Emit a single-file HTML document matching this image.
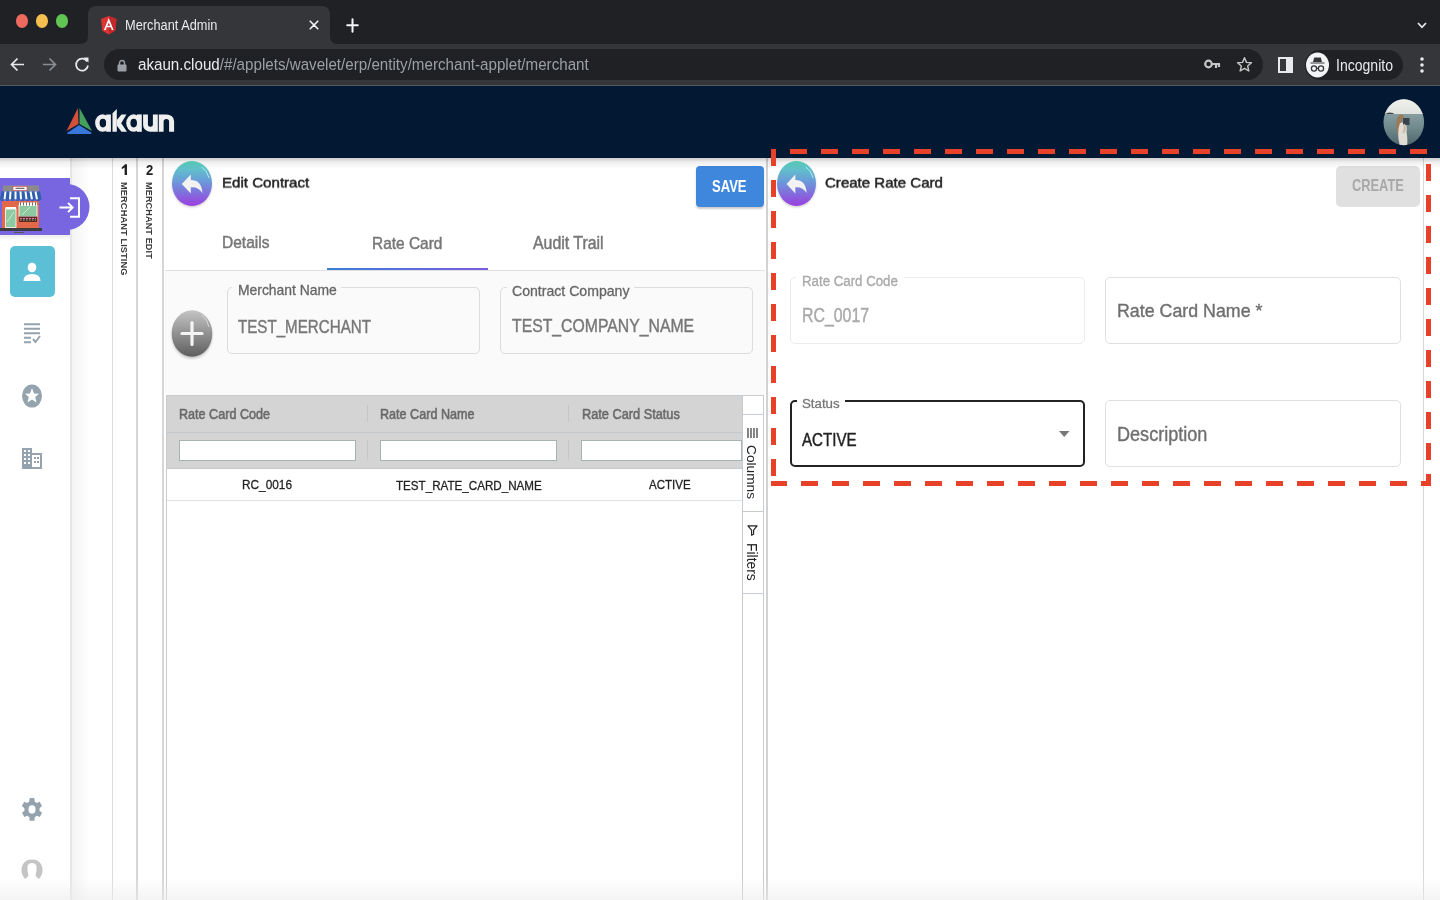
<!DOCTYPE html>
<html><head><meta charset="utf-8">
<style>
*{box-sizing:border-box;margin:0;padding:0}
html,body{width:1440px;height:900px;overflow:hidden;background:#fff;font-family:"Liberation Sans",sans-serif}
.abs{position:absolute}
.t{position:absolute;white-space:nowrap;line-height:1;transform-origin:0 0;will-change:transform}
svg{position:absolute;overflow:visible}
</style></head><body>

<div class="abs" style="left:0px;top:0px;width:1440px;height:44px;background:#202124"></div>
<div class="abs" style="left:15.75px;top:14px;width:12.5px;height:14px;background:#ed6a5e;border-radius:50%"></div>
<div class="abs" style="left:35.75px;top:14px;width:12.5px;height:14px;background:#f5bf4f;border-radius:50%"></div>
<div class="abs" style="left:55.75px;top:14px;width:12.5px;height:14px;background:#61c554;border-radius:50%"></div>
<div class="abs" style="left:88px;top:6px;width:242px;height:39px;background:#35363a;border-radius:8px 8px 0 0"></div>
<svg style="left:80px;top:36px" width="8" height="8"><path d="M0 8 Q8 8 8 0 L8 8 Z" fill="#35363a"/></svg>
<svg style="left:330px;top:36px" width="8" height="8"><path d="M0 0 Q0 8 8 8 L0 8 Z" fill="#35363a"/></svg>
<svg style="left:101px;top:15.5px" width="15.5" height="18.5" viewBox="0 0 250 270" preserveAspectRatio="none"><path d="M125 0 L0 45 L19 212 L125 270 L231 212 L250 45 Z" fill="#dd3434"/><path d="M125 0 L125 270 L231 212 L250 45 Z" fill="#c3282b"/><path d="M125 30 L47 205 H76 L92 166 H158 L174 205 H203 Z M125 98 L148 144 H102 Z" fill="#fff"/></svg>
<div class="t" style="left:124.62px;top:18.80px;font-size:12.80px;color:#e8eaed;font-weight:normal;transform:scale(1.0000,1.0800);">Merchant Admin</div>
<svg style="left:309px;top:19.8px" width="10" height="10"><path d="M1.2 1.2 L8.8 8.8 M8.8 1.2 L1.2 8.8" stroke="#f1f3f4" stroke-width="1.6" stroke-linecap="round"/></svg>
<svg style="left:345.5px;top:17.5px" width="13" height="15"><path d="M6.5 1.2 V13.8 M1.2 7.2 H11.8" stroke="#f6f7f8" stroke-width="2" stroke-linecap="round"/></svg>
<svg style="left:1417px;top:22px" width="10" height="7"><path d="M1 1 L5 5.3 L9 1" stroke="#e8eaed" stroke-width="1.7" fill="none"/></svg>
<div class="abs" style="left:0px;top:44px;width:1440px;height:41px;background:#35363a"></div>
<div class="abs" style="left:0px;top:85px;width:1440px;height:1px;background:#55585c"></div>
<svg style="left:10px;top:57px" width="15" height="15"><path d="M14 7.5 H2 M7.5 1.5 L1.5 7.5 L7.5 13.5" stroke="#e8eaed" stroke-width="1.7" fill="none"/></svg>
<svg style="left:42px;top:57px" width="15" height="15"><path d="M1 7.5 H13 M7.5 1.5 L13.5 7.5 L7.5 13.5" stroke="#8a8d91" stroke-width="1.7" fill="none"/></svg>
<svg style="left:74px;top:56px" width="16" height="17"><path d="M13.2 5.5 A6 6 0 1 0 14 9.5" stroke="#e8eaed" stroke-width="1.7" fill="none"/><path d="M9.5 1.5 H14.5 V6.5 Z" fill="#e8eaed"/></svg>
<div class="abs" style="left:104px;top:49px;width:1159px;height:31px;background:#202124;border-radius:16px"></div>
<svg style="left:117px;top:59px" width="10" height="13"><path d="M2.5 6 V4 A2.5 2.5 0 0 1 7.5 4 V6" stroke="#9aa0a6" stroke-width="1.4" fill="none"/><rect x="0.5" y="5.5" width="9" height="7" rx="1" fill="#9aa0a6"/></svg>
<div class="t" style="left:137.55px;top:55.82px;font-size:15.16px;color:#e8eaed;font-weight:normal;transform:scale(1.0000,1.1000);">akaun.cloud<span style="color:#9aa0a6">/#/applets/wavelet/erp/entity/merchant-applet/merchant</span></div>
<svg style="left:1204px;top:59px" width="17" height="11"><circle cx="4.5" cy="5" r="3.3" stroke="#c4c7c5" stroke-width="2.2" fill="none"/><path d="M7.5 5 H16 M12 5 V9 M15 5 V8" stroke="#c4c7c5" stroke-width="2.2"/></svg>
<svg style="left:1236px;top:56px" width="17" height="17" viewBox="0 0 24 24"><path d="M12 2.5 L14.8 9 L21.8 9.6 L16.5 14.2 L18.1 21.2 L12 17.4 L5.9 21.2 L7.5 14.2 L2.2 9.6 L9.2 9 Z" stroke="#c4c7c5" stroke-width="2" fill="none" stroke-linejoin="round"/></svg>
<svg style="left:1278px;top:57px" width="15" height="16"><rect x="1" y="1" width="13" height="14" stroke="#e8eaed" stroke-width="2" fill="none"/><rect x="8" y="1" width="6" height="14" fill="#e8eaed"/></svg>
<div class="abs" style="left:1305px;top:50px;width:98px;height:30px;background:#202124;border-radius:15px"></div>
<svg style="left:1306px;top:52px" width="23" height="26"><ellipse cx="11.5" cy="13" rx="11.5" ry="12.5" fill="#f1f3f4"/><path d="M7 10 L8.2 5.5 H14.8 L16 10 Z M4.5 10.5 H18.5 V11.5 H4.5 Z" fill="#35363a"/><circle cx="8" cy="16.5" r="2.6" stroke="#35363a" stroke-width="1.3" fill="none"/><circle cx="15" cy="16.5" r="2.6" stroke="#35363a" stroke-width="1.3" fill="none"/><path d="M10.6 16.3 H12.4" stroke="#35363a" stroke-width="1.2"/></svg>
<div class="t" style="left:1335.58px;top:56.82px;font-size:14.04px;color:#e8eaed;font-weight:normal;transform:scale(1.0000,1.1900);">Incognito</div>
<svg style="left:1420px;top:57px" width="4" height="16"><circle cx="2" cy="2" r="1.8" fill="#e8eaed"/><circle cx="2" cy="8" r="1.8" fill="#e8eaed"/><circle cx="2" cy="14" r="1.8" fill="#e8eaed"/></svg>
<div class="abs" style="left:0px;top:86px;width:1440px;height:72px;background:#031832"></div>
<svg style="left:66px;top:108px" width="27" height="26" viewBox="0 0 27 26"><path d="M12 0 L12.5 16 L0.5 23 Z" fill="#d4503a"/><path d="M13.5 0 L26 23 L13.5 16 Z" fill="#45a05b"/><path d="M13 17 L26 25 Q25 26 24 26 H2.5 Q1 26 1 25 Z" fill="#3a77db"/></svg>
<svg style="left:0;top:0" width="200" height="150"><g fill="#efefef"><path fill-rule="evenodd" d="M95.1 123.05 A7.5 8.75 0 1 0 110.1 123.05 A7.5 8.75 0 1 0 95.1 123.05 Z M99.6 123.05 A3.3 4.35 0 1 0 106.2 123.05 A3.3 4.35 0 1 0 99.6 123.05 Z"/><rect x="106.2" y="114.5" width="4.7" height="17.3"/><path d="M112.5 113.2 L116.8 109 V131.8 H112.5 Z"/><path d="M116.8 120 L121.5 114.5 H126.4 L121.2 123.2 L127 131.8 H121.5 L116.8 125.5 Z"/><path fill-rule="evenodd" d="M126.2 123.05 A7.4 8.7 0 1 0 141 123.05 A7.4 8.7 0 1 0 126.2 123.05 Z M130.4 123.1 A3.3 4.3 0 1 0 137 123.1 A3.3 4.3 0 1 0 130.4 123.1 Z"/><rect x="137" y="114.4" width="4.8" height="17.4"/><path d="M143.1 114.4 H147.9 V124.3 A2.5 2.5 0 0 0 152.9 124.3 V114.4 H157.8 V131.7 H150.4 A7.3 6.5 0 0 1 143.1 125.2 Z"/><path d="M158.8 131.7 V114.4 H166.4 A7.7 6.5 0 0 1 174.1 120.9 V131.7 H169.1 V121.6 A2.75 2.5 0 0 0 163.6 121.6 V131.7 Z"/></g></svg>
<svg style="left:1383px;top:99px" width="42" height="48"><defs><clipPath id="av"><ellipse cx="20.8" cy="23.3" rx="20.3" ry="23"/></clipPath><linearGradient id="sea" x1="0" y1="0" x2="0" y2="1"><stop offset="0" stop-color="#9fb4b6"/><stop offset="0.6" stop-color="#6f898c"/><stop offset="1" stop-color="#4a6468"/></linearGradient><linearGradient id="sky" x1="0" y1="0" x2="0" y2="1"><stop offset="0" stop-color="#f2f1ec"/><stop offset="1" stop-color="#dfe2de"/></linearGradient></defs>
<g clip-path="url(#av)"><rect width="42" height="48" fill="url(#sea)"/><rect width="42" height="15" fill="url(#sky)"/><path d="M2 15 Q5 12.5 10 14 L11 15 Z" fill="#3d4a48"/>
<path d="M16 16 Q12.5 20 13.5 30 Q14 35 15.5 36 L18 27 Q18.5 20 21 18 Q19.5 14.5 16 16Z" fill="#9b7a55"/>
<path d="M17 24 Q14.5 30 15.5 40 L17 48 H24 Q25 40 23.5 33 Q24.5 27 22 23 Z" fill="#e0ddd6"/>
<path d="M20 19 H26.5 V26 H20 Z" fill="#38434a"/><path d="M21 25 Q23 30 20 34" stroke="#c9b9a4" stroke-width="2" fill="none"/></g></svg>
<div class="abs" style="left:70px;top:158px;width:2px;height:742px;background:#e6e6e6"></div>
<div class="abs" style="left:72px;top:158px;width:18px;height:742px;background:linear-gradient(90deg,#f3f3f3,#fff)"></div>
<div class="abs" style="left:0px;top:178px;width:70px;height:57px;background:#7866e0"></div>
<svg style="left:46px;top:184px" width="44" height="46"><ellipse cx="21" cy="23" rx="22.5" ry="23" fill="#7866e0"/></svg>
<div class="abs" style="left:0px;top:235px;width:70px;height:6px;background:linear-gradient(rgba(0,0,0,0.08),rgba(0,0,0,0))"></div>
<svg style="left:0px;top:184px" width="44" height="52" viewBox="0 0 44 52">
<rect x="3" y="1.5" width="36" height="6" fill="#8b8b8b"/><rect x="13" y="2.3" width="14" height="4" fill="#fff" stroke="#d44" stroke-width="0.6"/><path d="M15.5 4.3 H24.5" stroke="#555" stroke-width="1.1"/>
<path d="M1.5 7.5 H40 L41.5 15.5 H0 Z" fill="#2e5fae"/>
<path d="M5.5 7.5 L4.5 15.5 M10.5 7.5 L10 15.5 M15.5 7.5 L15.5 15.5 M20.5 7.5 L21 15.5 M25.5 7.5 L26.5 15.5 M30.5 7.5 L32 15.5 M35.5 7.5 L37 15.5" stroke="#fff" stroke-width="2"/>
<path d="M0 15.5 Q2.5 18.5 5 15.5 Q7.5 18.5 10 15.5 Q12.5 18.5 15 15.5 Q17.5 18.5 20 15.5 Q22.5 18.5 25 15.5 Q27.5 18.5 30 15.5 Q32.5 18.5 35 15.5 Q37.5 18.5 41.5 15.5" fill="#2e5fae"/>
<rect x="2" y="17" width="37" height="27" fill="#e2684a"/>
<rect x="5.5" y="25" width="10.5" height="18.5" fill="#8fc9a1" stroke="#fff" stroke-width="0.8"/><path d="M7 38 L14 28" stroke="#c8ead2" stroke-width="1"/>
<rect x="5.5" y="23" width="10.5" height="2" fill="#fff"/>
<rect x="19" y="21.5" width="18" height="11" fill="#8fc9a1" stroke="#fff" stroke-width="0.8"/><path d="M22 31 L30 23" stroke="#c8ead2" stroke-width="1"/>
<path d="M19 18.5 H37 V21.5 H19Z" fill="#fff"/><path d="M20.5 18.5 V21.5 M23.5 18.5 V21.5 M26.5 18.5 V21.5 M29.5 18.5 V21.5 M32.5 18.5 V21.5 M35.5 18.5 V21.5" stroke="#444" stroke-width="0.8"/>
<rect x="19" y="32.5" width="18" height="5.5" fill="#5a2a2a"/><path d="M20 34.5 H36" stroke="#e07aa8" stroke-width="1.2" stroke-dasharray="2 1"/><path d="M20 36 H36" stroke="#7ccf7c" stroke-width="0.9" stroke-dasharray="1.5 1.5"/>
<rect x="0" y="44" width="42" height="3" fill="#3c3c3c"/><rect x="14" y="48" width="10" height="1" fill="#555"/>
</svg>
<svg style="left:58px;top:196px" width="23" height="23"><path d="M12 2.2 H21 V20.8 H12" stroke="#fff" stroke-width="1.9" fill="none"/><path d="M1.5 11.5 H14.5 M10 6.8 L14.7 11.5 L10 16.2" stroke="#fff" stroke-width="1.9" fill="none"/></svg>
<div class="abs" style="left:10px;top:246px;width:45px;height:51px;background:#5bc0d6;border-radius:5px"></div>
<svg style="left:23px;top:262px" width="18" height="20"><ellipse cx="9" cy="5.5" rx="4.3" ry="4.8" fill="#fff"/><path d="M0.5 19 Q0.5 12 9 12 Q17.5 12 17.5 19 Z" fill="#fff"/></svg>
<svg style="left:24px;top:323px" width="17" height="22"><path d="M0 1.2 H16 M0 5.7 H16 M0 10.2 H16 M0 14.7 H7 M0 19.2 H7" stroke="#94a3ad" stroke-width="2"/><path d="M9 16 L11.5 19 L16 13" stroke="#94a3ad" stroke-width="2" fill="none"/></svg>
<svg style="left:22px;top:384px" width="20" height="24"><ellipse cx="10" cy="12" rx="10" ry="11.5" fill="#94a3ad"/><path d="M10 4 L12 9.5 L17 9.7 L13.2 13 L14.5 18.5 L10 15.5 L5.5 18.5 L6.8 13 L3 9.7 L8 9.5 Z" fill="#fff"/></svg>
<svg style="left:22px;top:448px" width="20" height="21"><path d="M0 0 H10 V5 H20 V21 H0 Z" fill="#94a3ad"/><g fill="#fff"><rect x="2" y="2" width="2" height="2"/><rect x="6" y="2" width="2" height="2"/><rect x="2" y="6" width="2" height="2"/><rect x="6" y="6" width="2" height="2"/><rect x="2" y="10" width="2" height="2"/><rect x="6" y="10" width="2" height="2"/><rect x="2" y="14" width="2" height="2"/><rect x="6" y="14" width="2" height="2"/><rect x="10" y="7" width="8" height="12"/></g><g fill="#94a3ad"><rect x="12" y="9" width="2" height="2"/><rect x="12" y="13" width="2" height="2"/><rect x="15" y="9" width="2" height="2"/><rect x="15" y="13" width="2" height="2"/></g></svg>
<svg style="left:22px;top:797.5px" width="20" height="22.8" viewBox="4.5 3 17 18" preserveAspectRatio="none"><path fill="#94a3ad" d="M19.4 13a7.5 7.5 0 0 0 0-2l2.1-1.6-2-3.5-2.5 1a7.3 7.3 0 0 0-1.7-1L15 3h-4l-.4 2.9a7.3 7.3 0 0 0-1.7 1l-2.5-1-2 3.5L6.6 11a7.5 7.5 0 0 0 0 2l-2.1 1.6 2 3.5 2.5-1c.5.4 1.1.7 1.7 1L11 21h4l.4-2.9c.6-.3 1.2-.6 1.7-1l2.5 1 2-3.5z"/><ellipse cx="13" cy="12" rx="3" ry="3.3" fill="#fff"/></svg>
<svg style="left:21px;top:859px" width="22" height="21"><path d="M4 20 Q0 15 0.5 10 Q1.5 0.5 11 0.5 Q20.5 0.5 21.5 10 Q22 15 18 20 Q15 18 14.5 16 Q16 12 15.5 7 Q14.5 4 11 4 Q7.5 4 6.5 7 Q6 12 7.5 16 Q7 18 4 20 Z" fill="#c4c4c4"/></svg>
<div class="abs" style="left:112px;top:158px;width:1px;height:742px;background:#dcdcdc"></div>
<div class="abs" style="left:136px;top:158px;width:2px;height:742px;background:#d6d6d6"></div>
<div class="abs" style="left:162px;top:158px;width:2px;height:742px;background:#d6d6d6"></div>
<svg style="left:0;top:0" width="200" height="200"><path d="M121.8 167.2 L125.2 164.3 H127 V175 H124.6 V167.6 L121.8 169.3 Z" fill="#222"/></svg>
<div class="t" style="left:145.61px;top:162.63px;font-size:13.00px;color:#222;font-weight:bold;transform:scale(1.0000,1.1000);">2</div>
<div class="t" style="left:128px;top:182px;font-size:9.25px;color:#3a3a3a;font-weight:bold;transform-origin:0 0;transform:rotate(90deg) scaleY(1.0);letter-spacing:0.1px">MERCHANT LISTING</div>
<div class="t" style="left:153px;top:182px;font-size:9.15px;color:#3a3a3a;font-weight:bold;transform-origin:0 0;transform:rotate(90deg);letter-spacing:0.1px">MERCHANT EDIT</div>
<svg style="left:169px;top:159px" width="46" height="51"><defs><linearGradient id="g1" x1="0" y1="0" x2="0" y2="1"><stop offset="0" stop-color="#5bd8c0"/><stop offset="0.45" stop-color="#6a9bd9"/><stop offset="1" stop-color="#9b3ee0"/></linearGradient><filter id="g1f" x="-20%" y="-20%" width="140%" height="140%"><feGaussianBlur stdDeviation="1.2"/></filter></defs>
<ellipse cx="23.0" cy="26.0" rx="20.0" ry="22.5" fill="#000" opacity="0.18" filter="url(#g1f)"/>
<ellipse cx="23.0" cy="24.5" rx="20.0" ry="22.5" fill="url(#g1)"/>
<path d="M32.6 7.8500000000000005 A18.0 20.5 0 0 1 40.2 19.1" stroke="#bff" stroke-width="1" fill="none" opacity="0.8"/>
<path d="M12.8 24.95 L21.799999999999997 15.5 L21.799999999999997 20.9 Q32.6 20.9 33.4 33.95 Q29.400000000000002 27.65 21.799999999999997 28.325 L21.799999999999997 34.4 Z" fill="#f2f2f2"/></svg>
<div class="t" style="left:221.55px;top:174.81px;font-size:15.10px;color:#222;font-weight:normal;transform:scale(1.0000,0.9600);-webkit-text-stroke:0.5px #222;">Edit Contract</div>
<div class="abs" style="left:696px;top:166px;width:68px;height:41px;background:#3f86dd;border-radius:4px;box-shadow:0 2px 2px rgba(0,0,0,0.2)"></div>
<div class="t" style="left:712.21px;top:178.40px;font-size:13.06px;color:#fff;font-weight:bold;transform:scale(1.0000,1.2300);">SAVE</div>
<div class="t" style="left:222.03px;top:234.63px;font-size:15.55px;color:#777;font-weight:normal;transform:scale(1.0000,1.0200);-webkit-text-stroke:0.45px #777;">Details</div>
<div class="t" style="left:371.54px;top:234.54px;font-size:15.45px;color:#777;font-weight:normal;transform:scale(1.0000,1.0700);-webkit-text-stroke:0.45px #777;">Rate Card</div>
<div class="t" style="left:532.52px;top:233.68px;font-size:15.90px;color:#777;font-weight:normal;transform:scale(1.0000,1.1200);-webkit-text-stroke:0.45px #777;">Audit Trail</div>
<div class="abs" style="left:165px;top:270px;width:600px;height:1px;background:#e0e0e0"></div>
<div class="abs" style="left:327px;top:268px;width:161px;height:2px;background:linear-gradient(90deg,#3a7fd8,#7a5ae0)"></div>
<div class="abs" style="left:165px;top:271px;width:600px;height:124px;background:#fafafa"></div>
<svg style="left:169px;top:308px" width="46" height="52"><defs><linearGradient id="gp" x1="0" y1="0" x2="0" y2="1"><stop offset="0" stop-color="#c4c4c4"/><stop offset="1" stop-color="#5e5e5e"/></linearGradient><filter id="gpf"><feGaussianBlur stdDeviation="1.2"/></filter></defs>
<ellipse cx="23" cy="27.5" rx="20.3" ry="23.3" fill="#000" opacity="0.2" filter="url(#gpf)"/>
<ellipse cx="23" cy="25.5" rx="20.3" ry="23.3" fill="url(#gp)"/>
<path d="M33 7 A18 21 0 0 1 40 19" stroke="#eee" stroke-width="1" fill="none" opacity="0.7"/>
<path d="M23 14.5 V36.5 M13 25.5 H33" stroke="#f4f4f4" stroke-width="3.2" stroke-linecap="round"/></svg>
<div class="abs" style="left:227px;top:287px;width:253px;height:67px;border:1px solid #dcdcdc;border-radius:5px;background:transparent"></div>
<div class="abs" style="left:232px;top:285px;width:109px;height:5px;background:#fafafa"></div>
<div class="t" style="left:237.88px;top:284.19px;font-size:13.90px;color:#666;font-weight:normal;-webkit-text-stroke:0.3px #666;">Merchant Name</div>
<div class="t" style="left:237.55px;top:316.93px;font-size:15.15px;color:#777;font-weight:normal;transform:scale(1.0000,1.2000);-webkit-text-stroke:0.35px #777;">TEST_MERCHANT</div>
<div class="abs" style="left:500px;top:287px;width:253px;height:67px;border:1px solid #dcdcdc;border-radius:5px;background:transparent"></div>
<div class="abs" style="left:507px;top:285px;width:127px;height:5px;background:#fafafa"></div>
<div class="t" style="left:511.58px;top:284.16px;font-size:14.10px;color:#666;font-weight:normal;-webkit-text-stroke:0.3px #666;">Contract Company</div>
<div class="t" style="left:511.53px;top:316.87px;font-size:15.79px;color:#777;font-weight:normal;transform:scale(1.0000,1.1800);-webkit-text-stroke:0.35px #777;">TEST_COMPANY_NAME</div>
<div class="abs" style="left:166px;top:395px;width:576px;height:505px;border-left:1px solid #c5cbce;border-top:1px solid #c5cbce;background:#fff"></div>
<div class="abs" style="left:167px;top:396px;width:575px;height:36px;background:#d4d4d4"></div>
<div class="abs" style="left:167px;top:432px;width:575px;height:1px;background:#c2c8cb"></div>
<div class="abs" style="left:167px;top:433px;width:575px;height:35px;background:#d4d4d4"></div>
<div class="abs" style="left:167px;top:468px;width:575px;height:1px;background:#c5cbce"></div>
<div class="abs" style="left:167px;top:500px;width:575px;height:1px;background:#dde2e4"></div>
<div class="abs" style="left:367px;top:405px;width:1px;height:17px;background:#c6c6c6"></div>
<div class="abs" style="left:367px;top:440px;width:1px;height:20px;background:#c6c6c6"></div>
<div class="abs" style="left:568px;top:405px;width:1px;height:17px;background:#c6c6c6"></div>
<div class="abs" style="left:568px;top:440px;width:1px;height:20px;background:#c6c6c6"></div>
<div class="abs" style="left:179px;top:440px;width:177px;height:21px;background:#fff;border:1px solid #a7b3b3;border-right-color:#a7b3b3"></div>
<div class="abs" style="left:380px;top:440px;width:177px;height:21px;background:#fff;border:1px solid #a7b3b3;border-right-color:#a7b3b3"></div>
<div class="abs" style="left:581px;top:440px;width:161px;height:21px;background:#fff;border:1px solid #a7b3b3;border-right-color:#a7b3b3"></div>
<div class="t" style="left:179.32px;top:407.99px;font-size:12.60px;color:#6a6a6a;font-weight:normal;transform:scale(1.0000,1.1000);-webkit-text-stroke:0.5px #6a6a6a;">Rate Card Code</div>
<div class="t" style="left:380.42px;top:407.99px;font-size:12.60px;color:#6a6a6a;font-weight:normal;transform:scale(1.0000,1.1000);-webkit-text-stroke:0.5px #6a6a6a;">Rate Card Name</div>
<div class="t" style="left:581.62px;top:407.97px;font-size:12.75px;color:#6a6a6a;font-weight:normal;transform:scale(1.0000,1.1000);-webkit-text-stroke:0.5px #6a6a6a;">Rate Card Status</div>
<div class="t" style="left:242.14px;top:479.10px;font-size:11.85px;color:#222;font-weight:normal;transform:scale(1.0000,1.1000);-webkit-text-stroke:0.25px #222;">RC_0016</div>
<div class="t" style="left:395.65px;top:479.13px;font-size:11.64px;color:#222;font-weight:normal;transform:scale(1.0000,1.1000);-webkit-text-stroke:0.25px #222;">TEST_RATE_CARD_NAME</div>
<div class="t" style="left:648.85px;top:479.15px;font-size:11.52px;color:#222;font-weight:normal;transform:scale(1.0000,1.1000);-webkit-text-stroke:0.25px #222;">ACTIVE</div>
<div class="abs" style="left:742px;top:395px;width:22px;height:505px;background:#fff;border-left:1px solid #c5cbce;border-right:1px solid #c5cbce;border-top:1px solid #c5cbce"></div>
<div class="abs" style="left:742px;top:414px;width:22px;height:1px;background:#c5cbce"></div>
<div class="abs" style="left:742px;top:511px;width:22px;height:1px;background:#c5cbce"></div>
<div class="abs" style="left:742px;top:593px;width:22px;height:1px;background:#c5cbce"></div>
<svg style="left:747px;top:428px" width="11" height="10"><path d="M1 0 V10 M4 0 V10 M7 0 V10 M10 0 V10" stroke="#333" stroke-width="1.2"/></svg>
<div class="t" style="left:758px;top:445px;font-size:13.7px;color:#222;transform:rotate(90deg) scaleY(1.0)">Columns</div>
<svg style="left:747px;top:525px" width="11" height="11"><path d="M0.9 0.9 H10.1 L6.6 5.2 V9.3 L4.6 10.3 V5.2 Z" stroke="#222" stroke-width="1.15" fill="none" stroke-linejoin="round"/></svg>
<div class="t" style="left:758px;top:543px;font-size:13.9px;color:#222;transform:rotate(90deg)">Filters</div>
<div class="abs" style="left:766px;top:158px;width:2px;height:742px;background:#d2d2d2"></div>
<svg style="left:774px;top:159px" width="45" height="51"><defs><linearGradient id="g2" x1="0" y1="0" x2="0" y2="1"><stop offset="0" stop-color="#5bd8c0"/><stop offset="0.45" stop-color="#6a9bd9"/><stop offset="1" stop-color="#9b3ee0"/></linearGradient><filter id="g2f" x="-20%" y="-20%" width="140%" height="140%"><feGaussianBlur stdDeviation="1.2"/></filter></defs>
<ellipse cx="22.5" cy="26.0" rx="19.5" ry="22.5" fill="#000" opacity="0.18" filter="url(#g2f)"/>
<ellipse cx="22.5" cy="24.5" rx="19.5" ry="22.5" fill="url(#g2)"/>
<path d="M31.86 7.8500000000000005 A17.5 20.5 0 0 1 39.27 19.1" stroke="#bff" stroke-width="1" fill="none" opacity="0.8"/>
<path d="M12.555 24.95 L21.33 15.5 L21.33 20.9 Q31.86 20.9 32.64 33.95 Q28.740000000000002 27.65 21.33 28.325 L21.33 34.4 Z" fill="#f2f2f2"/></svg>
<div class="t" style="left:825.05px;top:174.99px;font-size:15.05px;color:#222;font-weight:normal;transform:scale(1.0000,0.9700);-webkit-text-stroke:0.5px #222;">Create Rate Card</div>
<div class="abs" style="left:1336px;top:166px;width:84px;height:41px;background:#e0e0e0;border-radius:5px"></div>
<div class="t" style="left:1352.41px;top:178.20px;font-size:12.85px;color:#a8a8a8;font-weight:bold;transform:scale(1.0000,1.2500);">CREATE</div>
<div class="abs" style="left:790px;top:277px;width:295px;height:67px;border:1px solid #ececec;border-radius:5px;background:transparent"></div>
<div class="abs" style="left:796px;top:275px;width:108px;height:5px;background:#fff"></div>
<div class="t" style="left:801.80px;top:273.68px;font-size:13.28px;color:#a9a9a9;font-weight:normal;transform:scale(1.0000,1.0500);-webkit-text-stroke:0.3px #a9a9a9;">Rate Card Code</div>
<div class="t" style="left:801.52px;top:306.45px;font-size:15.88px;color:#a9a9a9;font-weight:normal;transform:scale(1.0000,1.2300);-webkit-text-stroke:0.35px #a9a9a9;">RC_0017</div>
<div class="abs" style="left:1105px;top:277px;width:296px;height:67px;border:1px solid #e0e0e0;border-radius:5px;background:transparent"></div>
<div class="t" style="left:1117.17px;top:301.89px;font-size:17.81px;color:#6f6f6f;font-weight:normal;transform:scale(1.0000,1.0800);-webkit-text-stroke:0.35px #6f6f6f;">Rate Card Name *</div>
<div class="abs" style="left:790px;top:400px;width:295px;height:67px;border:2px solid #222;border-radius:5px;background:transparent"></div>
<div class="abs" style="left:797px;top:398px;width:48px;height:6px;background:#fff"></div>
<div class="t" style="left:801.80px;top:397.07px;font-size:13.29px;color:#777;font-weight:normal;-webkit-text-stroke:0.3px #777;">Status</div>
<div class="t" style="left:801.55px;top:430.51px;font-size:15.15px;color:#222;font-weight:normal;transform:scale(1.0000,1.1600);-webkit-text-stroke:0.35px #222;">ACTIVE</div>
<svg style="left:1059px;top:431px" width="11" height="7"><path d="M0 0 H10.5 L5.25 6 Z" fill="#777"/></svg>
<div class="abs" style="left:1105px;top:400px;width:296px;height:67px;border:1px solid #e0e0e0;border-radius:5px;background:transparent"></div>
<div class="t" style="left:1116.96px;top:425.08px;font-size:18.08px;color:#6f6f6f;font-weight:normal;transform:scale(1.0000,1.0700);-webkit-text-stroke:0.35px #6f6f6f;">Description</div>
<div class="abs" style="left:1423px;top:158px;width:1px;height:742px;background:#d8d8d8"></div>
<div class="abs" style="left:0px;top:878px;width:1440px;height:22px;background:linear-gradient(rgba(255,255,255,0),rgba(235,235,235,0.55))"></div>
<div class="abs" style="left:0px;top:158px;width:1440px;height:11px;background:linear-gradient(rgba(0,0,0,0.2),rgba(0,0,0,0.06) 40%,rgba(0,0,0,0))"></div>
<svg style="left:0;top:0" width="1440" height="900"><rect x="790" y="149" width="17" height="5" fill="#e8412a"/><rect x="821" y="149" width="17" height="5" fill="#e8412a"/><rect x="852" y="149" width="17" height="5" fill="#e8412a"/><rect x="883" y="149" width="17" height="5" fill="#e8412a"/><rect x="914" y="149" width="17" height="5" fill="#e8412a"/><rect x="945" y="149" width="17" height="5" fill="#e8412a"/><rect x="976" y="149" width="17" height="5" fill="#e8412a"/><rect x="1007" y="149" width="17" height="5" fill="#e8412a"/><rect x="1038" y="149" width="17" height="5" fill="#e8412a"/><rect x="1069" y="149" width="17" height="5" fill="#e8412a"/><rect x="1100" y="149" width="17" height="5" fill="#e8412a"/><rect x="1131" y="149" width="17" height="5" fill="#e8412a"/><rect x="1162" y="149" width="17" height="5" fill="#e8412a"/><rect x="1193" y="149" width="17" height="5" fill="#e8412a"/><rect x="1224" y="149" width="17" height="5" fill="#e8412a"/><rect x="1255" y="149" width="17" height="5" fill="#e8412a"/><rect x="1286" y="149" width="17" height="5" fill="#e8412a"/><rect x="1317" y="149" width="17" height="5" fill="#e8412a"/><rect x="1348" y="149" width="17" height="5" fill="#e8412a"/><rect x="1379" y="149" width="17" height="5" fill="#e8412a"/><rect x="1410" y="149" width="17" height="5" fill="#e8412a"/><rect x="1426" y="164" width="5" height="17" fill="#e8412a"/><rect x="1426" y="195" width="5" height="17" fill="#e8412a"/><rect x="1426" y="226" width="5" height="17" fill="#e8412a"/><rect x="1426" y="257" width="5" height="17" fill="#e8412a"/><rect x="1426" y="288" width="5" height="17" fill="#e8412a"/><rect x="1426" y="319" width="5" height="17" fill="#e8412a"/><rect x="1426" y="350" width="5" height="17" fill="#e8412a"/><rect x="1426" y="381" width="5" height="17" fill="#e8412a"/><rect x="1426" y="412" width="5" height="17" fill="#e8412a"/><rect x="1426" y="443" width="5" height="17" fill="#e8412a"/><rect x="1426" y="474" width="5" height="12" fill="#e8412a"/><rect x="801" y="481" width="17" height="5" fill="#e8412a"/><rect x="832" y="481" width="17" height="5" fill="#e8412a"/><rect x="863" y="481" width="17" height="5" fill="#e8412a"/><rect x="894" y="481" width="17" height="5" fill="#e8412a"/><rect x="925" y="481" width="17" height="5" fill="#e8412a"/><rect x="956" y="481" width="17" height="5" fill="#e8412a"/><rect x="987" y="481" width="17" height="5" fill="#e8412a"/><rect x="1018" y="481" width="17" height="5" fill="#e8412a"/><rect x="1049" y="481" width="17" height="5" fill="#e8412a"/><rect x="1080" y="481" width="17" height="5" fill="#e8412a"/><rect x="1111" y="481" width="17" height="5" fill="#e8412a"/><rect x="1142" y="481" width="17" height="5" fill="#e8412a"/><rect x="1173" y="481" width="17" height="5" fill="#e8412a"/><rect x="1204" y="481" width="17" height="5" fill="#e8412a"/><rect x="1235" y="481" width="17" height="5" fill="#e8412a"/><rect x="1266" y="481" width="17" height="5" fill="#e8412a"/><rect x="1297" y="481" width="17" height="5" fill="#e8412a"/><rect x="1328" y="481" width="17" height="5" fill="#e8412a"/><rect x="1359" y="481" width="17" height="5" fill="#e8412a"/><rect x="1390" y="481" width="17" height="5" fill="#e8412a"/><rect x="1421" y="481" width="10" height="5" fill="#e8412a"/><rect x="771" y="481" width="16" height="5" fill="#e8412a"/><rect x="771" y="149" width="5" height="17" fill="#e8412a"/><rect x="771" y="180" width="5" height="17" fill="#e8412a"/><rect x="771" y="211" width="5" height="17" fill="#e8412a"/><rect x="771" y="242" width="5" height="17" fill="#e8412a"/><rect x="771" y="273" width="5" height="17" fill="#e8412a"/><rect x="771" y="304" width="5" height="17" fill="#e8412a"/><rect x="771" y="335" width="5" height="17" fill="#e8412a"/><rect x="771" y="366" width="5" height="17" fill="#e8412a"/><rect x="771" y="397" width="5" height="17" fill="#e8412a"/><rect x="771" y="428" width="5" height="17" fill="#e8412a"/><rect x="771" y="459" width="5" height="17" fill="#e8412a"/></svg>
</body></html>
